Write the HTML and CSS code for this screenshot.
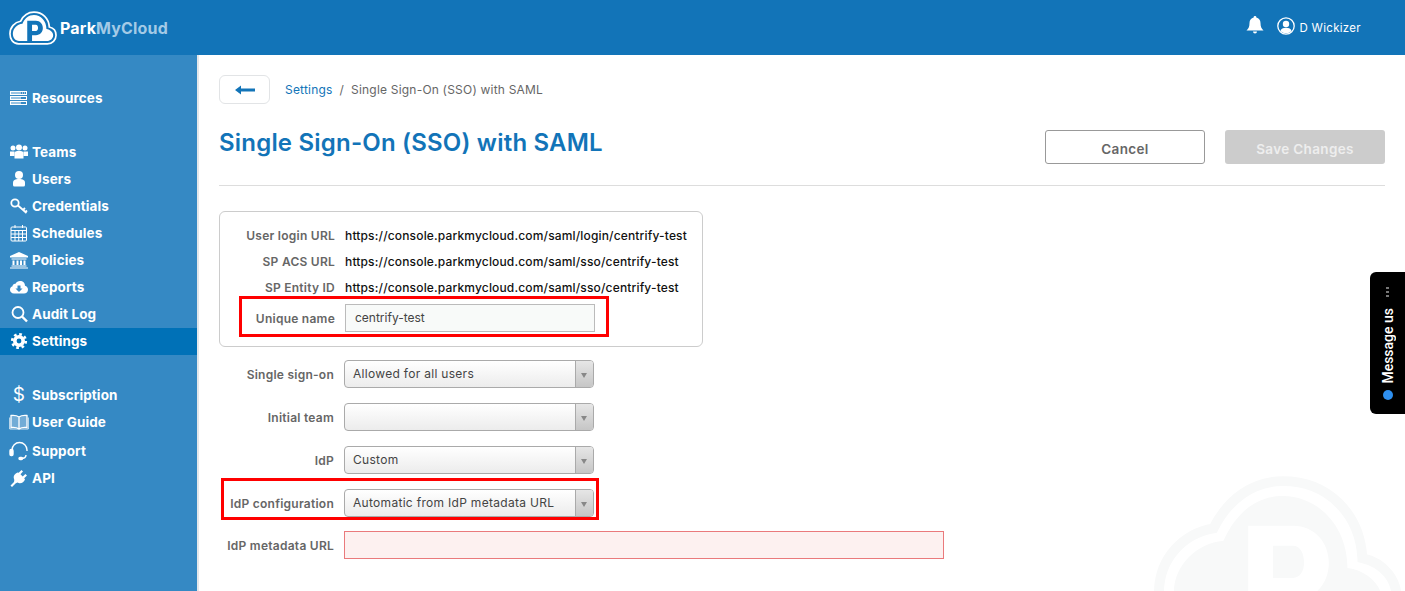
FILE: index.html
```html
<!DOCTYPE html>
<html lang="en">
<head>
    <meta charset="UTF-8">
    <meta name="viewport" content="width=device-width, initial-scale=1.0">
    <title>Single Sign-On (SSO) with SAML</title>
    <link rel="stylesheet" href="styles.css">
</head>
<body>
    <header class="topbar">
        <a class="brand">
            <svg class="brand-logo" viewBox="0 0 100 70">
                <path class="cloud-line" d="M20 68C8 68 2 58 2 47C2 33 12 23 24 21C30 9 40 2 52 2C70 2 83 15 84 33C93 35 98 42 98 50C98 60 90 68 80 68Z"/>
                <path class="cloud-body" d="M21 62C13 62 8 55 8 47C8 36 17 27 28 26C33 15 41 8 52 8C66 8 78 20 78 37C86 38 92 44 92 50C92 57 86 62 79 62Z"/>
                <path class="cloud-p" fill-rule="evenodd" d="M38 20H56C65 20 70.500 27 70.500 35C70.500 43 65 50 56 50H48V62H38ZM48 28V41H56C59 41 60.500 38 60.500 35C60.500 31 59 28 56 28Z"/>
            </svg>
            <span class="brand-name">Park<span class="brand-light">MyCloud</span></span>
        </a>
        <div class="account">
            <svg class="bell" viewBox="0 0 18 18"><path d="M9 0a1.300 1.300 0 0 1 1.300 1.500C13 2 14.500 4.200 14.500 7C14.500 11 15.500 12.500 17.500 14.500H.5C2.500 12.500 3.500 11 3.500 7C3.500 4.200 5 2 7.700 1.500A1.300 1.300 0 0 1 9 0ZM7 15.500H11A2 2 0 0 1 7 15.500Z"/></svg>
            <svg class="avatar" viewBox="0 0 18 18"><circle cx="9" cy="9" r="8.200" fill="none" stroke="#fff" stroke-width="1.300"/><circle cx="9" cy="7" r="3.200"/><path d="M3.500 14C4 11.500 6 10.800 9 10.800S14 11.500 14.500 14C13 15.600 11 16.300 9 16.300S5 15.600 3.500 14Z"/></svg>
            <span class="account-name">D Wickizer</span>
        </div>
    </header>

    <div class="layout">
        <nav class="sidebar">
            <ul class="nav-group">
                <li class="nav-item">
                    <svg class="nav-icon" viewBox="0 0 20 20"><path fill-rule="evenodd" d="M1 3H18V7H1ZM2 4V6H17V4ZM13 4.500V5.500H14V4.500ZM15 4.500V5.500H16V4.500ZM1 8H18V12H1ZM2 9V11H17V9ZM1 13H18V17H1ZM2 14V16H17V14Z"/><path d="M2 4.500H12V5.500H2ZM2 9.500H12V10.500H2ZM2 14.500H12V15.500H2Z"/></svg>
                    Resources
                </li>
            </ul>
            <ul class="nav-group">
                <li class="nav-item">
                    <svg class="nav-icon" viewBox="0 0 20 20"><circle cx="4" cy="6" r="2.500"/><circle cx="16" cy="6" r="2.500"/><circle cx="10" cy="5.500" r="3"/><path d="M1 9.500H5.500V14H1ZM14.500 9.500H19V14H14.500Z"/><path d="M5.500 11C5.500 9.500 7 9 10 9S14.500 9.500 14.500 11V16.500H5.500Z"/></svg>
                    Teams
                </li>
                <li class="nav-item">
                    <svg class="nav-icon" viewBox="0 0 20 20"><circle cx="10" cy="6" r="4"/><path d="M4 14C4 11 6 10 10 10S16 11 16 14V16A1.500 1.500 0 0 1 14.500 17.500H5.500A1.500 1.500 0 0 1 4 16Z"/></svg>
                    Users
                </li>
                <li class="nav-item">
                    <svg class="nav-icon nav-icon-line" viewBox="0 0 20 20"><circle cx="6" cy="7" r="3.700"/><path d="M9 9.500L17.500 17M14 14L16 12M16.500 16L18 14.500"/></svg>
                    Credentials
                </li>
                <li class="nav-item">
                    <svg class="nav-icon nav-icon-thin" viewBox="0 0 20 20"><rect x="2" y="4" width="15.500" height="14" rx="1"/><path d="M2 7.500H17.500M2 11H17.500M2 14.500H17.500M6 7.500V18M9.750 7.500V18M13.500 7.500V18M6 2V5M13.500 2V5"/></svg>
                    Schedules
                </li>
                <li class="nav-item">
                    <svg class="nav-icon" viewBox="0 0 20 20"><path d="M10 2L19 6V7.500H1V6ZM2.500 8.500H17.500V9.500H2.500ZM3.500 10.500H5.500V15H3.500ZM7.500 10.500H9.500V15H7.500ZM11 10.500H13V15H11ZM14.500 10.500H16.500V15H14.500ZM2.500 15.500H17.500V16.500H2.500ZM1 17.500H19V18.500H1Z"/></svg>
                    Policies
                </li>
                <li class="nav-item">
                    <svg class="nav-icon" viewBox="0 0 20 20"><path fill-rule="evenodd" d="M5 16.500C2.500 16.500 1 14.800 1 12.800C1 11 2 9.800 3.500 9.300C3.600 7.500 5 6.500 6.500 6.800C7.500 5 9 4 11 4C14 4 16 6 16 8.800C17.900 9.300 19 10.800 19 12.700C19 14.800 17.300 16.500 15 16.500ZM8.500 8.500V11.500H6.500L10 15L13.500 11.500H11.500V8.500Z"/></svg>
                    Reports
                </li>
                <li class="nav-item">
                    <svg class="nav-icon nav-icon-line" viewBox="0 0 20 20"><circle cx="9" cy="8.500" r="5.500"/><path d="M13 12.500L18 17.500" stroke-width="2.400"/></svg>
                    Audit Log
                </li>
                <li class="nav-item nav-item-active">
                    <svg class="nav-icon nav-icon-gear" viewBox="0 0 20 20"><circle cx="10" cy="10" r="4.200"/><circle class="gear-teeth" cx="10" cy="10" r="6.800"/></svg>
                    Settings
                </li>
            </ul>
            <ul class="nav-group">
                <li class="nav-item">
                    <span class="nav-glyph">$</span>
                    Subscription
                </li>
                <li class="nav-item">
                    <svg class="nav-icon nav-icon-book" viewBox="0 0 20 20"><path class="page" d="M10 5C8 3.500 5 3.200 2 3.500V15.500C5 15.200 8 15.500 10 17C12 15.500 15 15.200 18 15.500V3.500C15 3.200 12 3.500 10 5ZM10 5V17"/><path d="M.7 5.500V17H19.300V5.500" stroke-width=".8"/></svg>
                    User Guide
                </li>
                <li class="nav-item nav-item-tall">
                    <svg class="nav-icon nav-icon-head" viewBox="0 0 20 20"><path d="M3 10V9A7.500 7.500 0 0 1 18 9V10M17 14C17 16.500 15 17.500 12 17.500"/><rect class="solid" x="1" y="8.500" width="3" height="6" rx="1.200"/><rect class="solid" x="10" y="16.500" width="3.500" height="2" rx="1"/></svg>
                    Support
                </li>
                <li class="nav-item">
                    <svg class="nav-icon" viewBox="0 0 20 20"><path d="M12.500 2L14 3.500L11.500 6.300L13.700 8.500L16.400 6L18 7.500L15.200 10.300L16 11.500C15 14 13 15.500 10.500 15.300L8.300 14.500L6.500 15.500L3 19L1.500 17.500L5 14L5.300 12L4.700 9.700C4.500 7.500 6 5.500 8.500 4.500L9.700 4.800Z"/></svg>
                    API
                </li>
            </ul>
        </nav>

        <main class="content">
            <svg class="watermark" viewBox="0 0 100 70">
                <path class="cloud-line" d="M20 68C8 68 2 58 2 47C2 33 12 23 24 21C30 9 40 2 52 2C70 2 83 15 84 33C93 35 98 42 98 50C98 60 90 68 80 68Z"/>
                <path class="cloud-body" fill-rule="evenodd" d="M21 62C13 62 8 55 8 47C8 36 17 27 28 26C33 15 41 8 52 8C66 8 78 20 78 37C86 38 92 44 92 50C92 57 86 62 79 62H48V50H56C65 50 70.500 43 70.500 35C70.500 27 65 20 56 20H38V62ZM48 28V41H56C59 41 60.500 38 60.500 35C60.500 31 59 28 56 28Z"/>
            </svg>

            <div class="crumb-row">
                <button class="back-btn" type="button">
                    <svg viewBox="0 0 20 10" width="20" height="10"><path d="M0 5L6 .5V3.500H20V6.500H6V9.500Z"/></svg>
                </button>
                <span class="crumb-link">Settings</span>
                <span class="crumb-sep">/</span>
                <span class="crumb-text">Single Sign-On (SSO) with SAML</span>
            </div>

            <div class="title-row">
                <h1>Single Sign-On (SSO) with SAML</h1>
                <div class="title-actions">
                    <button class="btn btn-cancel" type="button">Cancel</button>
                    <button class="btn btn-save" type="button">Save Changes</button>
                </div>
            </div>

            <section class="info-panel">
                <div class="info-row"><span class="field-label">User login URL</span><span class="url">https://console.parkmycloud.com/saml/login/centrify-test</span></div>
                <div class="info-row"><span class="field-label">SP ACS URL</span><span class="url">https://console.parkmycloud.com/saml/sso/centrify-test</span></div>
                <div class="info-row"><span class="field-label">SP Entity ID</span><span class="url">https://console.parkmycloud.com/saml/sso/centrify-test</span></div>
                <div class="field field-name">
                    <label class="field-label">Unique name</label>
                    <div class="text-input">centrify-test</div>
                </div>
            </section>

            <form class="sso-form">
                <div class="field">
                    <label class="field-label">Single sign-on</label>
                    <div class="select"><span class="select-value">Allowed for all users</span><span class="select-arrow"></span></div>
                </div>
                <div class="field">
                    <label class="field-label">Initial team</label>
                    <div class="select"><span class="select-value"></span><span class="select-arrow"></span></div>
                </div>
                <div class="field">
                    <label class="field-label">IdP</label>
                    <div class="select"><span class="select-value">Custom</span><span class="select-arrow"></span></div>
                </div>
                <div class="field field-config">
                    <label class="field-label">IdP configuration</label>
                    <div class="select"><span class="select-value">Automatic from IdP metadata URL</span><span class="select-arrow"></span></div>
                </div>
                <div class="field field-wide">
                    <label class="field-label">IdP metadata URL</label>
                    <div class="text-input text-input-error"></div>
                </div>
            </form>
        </main>
    </div>

    <aside class="chat-tab">
        <span class="chat-dots"></span>
        <span class="chat-label">Message us</span>
        <span class="chat-dot"></span>
    </aside>
</body>
</html>
```
FILE: styles.css
```css
/* Reset */
* {
    margin: 0;
    padding: 0;
    box-sizing: border-box;
}

body {
    display: flex;
    flex-direction: column;
    height: 100vh;
    overflow: hidden;
    background: #fff;
    font-family: 'Inter', 'Liberation Sans', sans-serif;
    font-size: 12px;
    color: #555;
}

/* Top bar */
.topbar {
    display: flex;
    justify-content: space-between;
    align-items: center;
    height: 55px;
    flex-shrink: 0;
    padding: 0 44px 0 9px;
    background: #1274b8;
}

.brand {
    display: flex;
    align-items: center;
    gap: 3px;
}

.brand-logo {
    width: 48px;
    height: 34px;
}

.brand-logo .cloud-line {
    fill: none;
    stroke: #fff;
    stroke-width: 3.500;
}

.brand-logo .cloud-body {
    fill: #fff;
}

.brand-logo .cloud-p {
    fill: #1274b8;
}

.brand-name {
    font-size: 16px;
    font-weight: 700;
    color: #fff;
    letter-spacing: 0.15px;
}

.brand-light {
    color: #a3cae6;
}

.account {
    display: flex;
    align-items: center;
}

.bell {
    width: 18px;
    height: 18px;
    margin: -6px 13px 0 0;
    fill: #fff;
}

.avatar {
    width: 18px;
    height: 18px;
    margin: -3px 4px 0 0;
    fill: #fff;
}

.account-name {
    font-size: 11.500px;
    letter-spacing: 0.3px;
    color: #fff;
}

/* Main layout */
.layout {
    display: flex;
    flex: 1;
    min-height: 0;
}

.sidebar {
    width: 199px;
    flex-shrink: 0;
    padding-top: 30px;
    background: #3589c4;
    border-right: 2px solid #e4e7ea;
}

.nav-group {
    list-style: none;
    margin-bottom: 27px;
}

.nav-item {
    display: flex;
    align-items: center;
    gap: 3px;
    height: 27px;
    padding: 0 0 2px 9px;
    font-size: 13.500px;
    font-weight: 700;
    letter-spacing: 0.1px;
    color: #fff;
}

.nav-item-active {
    background: #0071b7;
}

.nav-item-tall {
    height: 29px;
    padding-top: 2px;
}

.nav-icon {
    width: 20px;
    height: 20px;
    flex-shrink: 0;
    fill: #fff;
}

.nav-icon-line {
    fill: none;
    stroke: #fff;
    stroke-width: 1.800;
}

.nav-icon-thin {
    fill: none;
    stroke: #fff;
    stroke-width: 1;
}

.nav-icon-head {
    fill: none;
    stroke: #fff;
    stroke-width: 1.400;
}

.nav-icon-head .solid {
    fill: #fff;
}

.nav-icon-book {
    fill: none;
    stroke: #fff;
    stroke-width: 1.300;
}

.nav-icon-book .page {
    fill: rgba(255, 255, 255, 0.3);
}

.nav-icon-gear circle {
    fill: none;
    stroke: #fff;
    stroke-width: 3.600;
}

.nav-icon-gear .gear-teeth {
    stroke-width: 2.600;
    stroke-dasharray: 2.670 2.670;
}

.nav-glyph {
    width: 20px;
    font-size: 19px;
    font-weight: 400;
    text-align: center;
}

/* Content */
.content {
    position: relative;
    flex: 1;
    min-width: 0;
    padding: 20px 20px 0;
    overflow: hidden;
}

.watermark {
    position: absolute;
    left: 955px;
    top: 421px;
    width: 248px;
    height: 174px;
}

.watermark .cloud-line {
    fill: none;
    stroke: #f8f9f9;
    stroke-width: 4;
}

.watermark .cloud-body {
    fill: #f8f9f9;
}

.crumb-row {
    display: flex;
    align-items: center;
    height: 29px;
    letter-spacing: 0.2px;
}

.back-btn {
    display: flex;
    align-items: center;
    justify-content: center;
    width: 51px;
    height: 29px;
    margin-right: 15px;
    background: #fff;
    border: 1px solid #e2e4e6;
    border-radius: 6px;
}

.back-btn svg {
    fill: #1274b8;
}

.crumb-link {
    color: #1274b8;
}

.crumb-sep {
    margin: 0 7px;
    color: #666;
}

.crumb-text {
    color: #666;
}

.title-row {
    display: flex;
    justify-content: space-between;
    margin-top: 26px;
    padding-bottom: 21px;
    border-bottom: 1px solid #ddd;
}

h1 {
    font-size: 24px;
    font-weight: 600;
    line-height: 26px;
    letter-spacing: 0.2px;
    color: #1274b8;
}

.title-actions {
    display: flex;
    gap: 20px;
}

.btn {
    width: 160px;
    height: 34px;
    padding-top: 3px;
    border-radius: 3px;
    font-family: inherit;
    font-size: 13.500px;
    font-weight: 600;
    letter-spacing: 0.35px;
}

.btn-cancel {
    background: #fff;
    border: 1px solid #999;
    color: #666;
}

.btn-save {
    background: #ccc;
    border: none;
    color: #eee;
}

/* SAML info box */
.info-panel {
    position: relative;
    width: 484px;
    margin-top: 25px;
    padding: 10px 0 14px;
    border: 1px solid #ccc;
    border-radius: 6px;
}

.info-row {
    display: grid;
    grid-template-columns: 115px auto;
    gap: 10px;
    align-items: center;
    height: 26px;
}

.field-label {
    text-align: right;
    font-weight: 600;
    letter-spacing: 0.25px;
    color: #666;
}

.url {
    color: #111;
    font-weight: 500;
    letter-spacing: 0.16px;
}

.field {
    position: relative;
    display: grid;
    grid-template-columns: 115px 250px;
    gap: 10px;
    align-items: center;
    width: 375px;
}

.field-wide {
    grid-template-columns: 115px 600px;
    width: 725px;
    margin-top: -1px;
}

/* Red annotation boxes */
.field-name {
    margin-top: 4px;
}

.field-name::after,
.field-config::after {
    content: "";
    position: absolute;
    border: 3px solid #f00;
    pointer-events: none;
}

.field-name::after {
    top: -8px;
    right: -14px;
    bottom: -5px;
    left: 19px;
}

.field-config::after {
    top: -11px;
    right: -5px;
    bottom: -3px;
    left: 2px;
}

.sso-form {
    display: flex;
    flex-direction: column;
    gap: 15px;
    margin-top: 13px;
}

.text-input {
    height: 28px;
    padding: 0 9px;
    line-height: 26px;
    background: #f8faf9;
    border: 1px solid #bbb;
    color: #444;
}

.text-input-error {
    background: #fdf1f0;
    border-color: #ea7a7c;
}

.select {
    display: flex;
    height: 28px;
    background: linear-gradient(#fff, #ececec);
    border: 1px solid #aaa;
    border-radius: 4px;
}

.select-value {
    flex: 1;
    padding-left: 8px;
    line-height: 26px;
    letter-spacing: 0.3px;
    color: #444;
}

.select-arrow {
    position: relative;
    width: 18px;
    background: linear-gradient(#e6e6e6, #c6c6c6);
    border-left: 1px solid #aaa;
    border-radius: 0 3px 3px 0;
}

.select-arrow::after {
    content: "";
    position: absolute;
    top: 12px;
    left: 5px;
    border-style: solid;
    border-width: 5px 3px 0;
    border-color: #888 transparent transparent;
}

/* Chat tab */
.chat-tab {
    position: fixed;
    top: 272px;
    right: 0;
    display: flex;
    flex-direction: column;
    align-items: center;
    width: 35px;
    height: 142px;
    padding: 15px 0 14px;
    background: #000;
    border-radius: 6px 0 0 6px;
}

.chat-dots {
    width: 3px;
    height: 10px;
    background: repeating-linear-gradient(#777 0 2px, transparent 2px 4px);
}

.chat-label {
    margin-top: 11px;
    writing-mode: vertical-rl;
    transform: rotate(180deg);
    white-space: nowrap;
    font-family: 'Roboto', 'Liberation Sans', sans-serif;
    font-size: 14px;
    font-weight: 500;
    color: #fff;
}

.chat-dot {
    width: 10px;
    height: 10px;
    margin-top: auto;
    background: #2e8fef;
    border-radius: 50%;
}
```
